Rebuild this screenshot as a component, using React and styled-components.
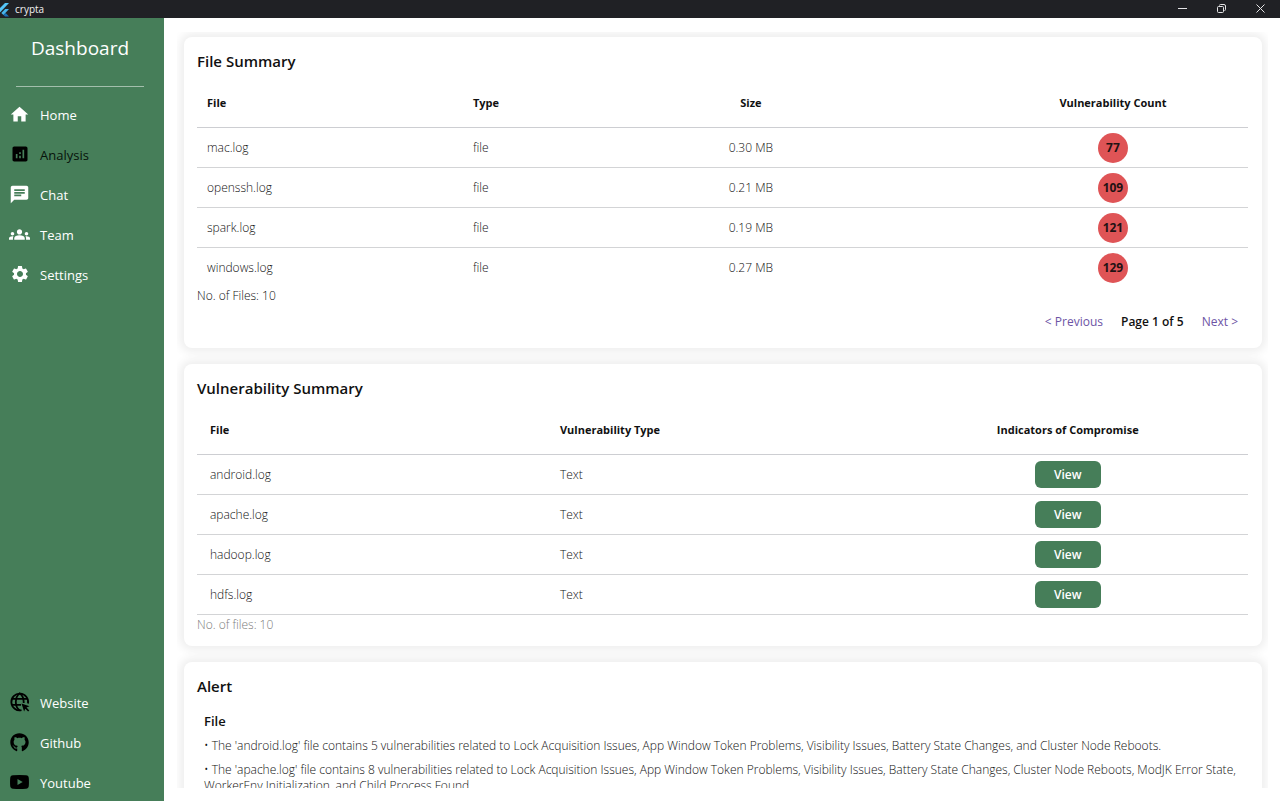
import React from "react";
import styled, { createGlobalStyle } from "styled-components";
import { MdHome, MdAnalytics, MdChat, MdGroups, MdSettings } from "react-icons/md";
import { FaGithub } from "react-icons/fa";

const GREEN = "#467e59";

const GlobalStyle = createGlobalStyle`
  * { box-sizing: border-box; }
  body {
    margin: 0;
    background: #fff;
    color: #111;
    font-family: "Open Sans", "Noto Sans", sans-serif;
    font-size: 12px;
    line-height: 16px;
  }
  button { font: inherit; cursor: pointer; }
`;

const Window = styled.div`
  height: 100vh;
  display: flex;
  flex-direction: column;
`;

const TitleBar = styled.header`
  flex: none;
  height: 18px;
  display: flex;
  align-items: center;
  justify-content: space-between;
  background: #202125;
  color: #f2f2f2;
  font-size: 10px;
`;

const AppName = styled.div`
  display: flex;
  align-items: center;
  gap: 5px;
`;

const WindowControls = styled.div`
  display: flex;
`;

const WindowButton = styled.button`
  width: 39px;
  height: 18px;
  padding: 0 0 2px;
  border: 0;
  background: none;
  color: #e4e4e6;
  display: grid;
  place-items: center;
`;

const Body = styled.div`
  flex: 1;
  min-height: 0;
  display: flex;
`;

const Sidebar = styled.aside`
  flex: none;
  width: 164px;
  background: ${GREEN};
  color: #fff;
  display: flex;
  flex-direction: column;
`;

const Brand = styled.h1`
  margin: 0 20px 0 16px;
  padding: 16px 0 24px;
  border-bottom: 1px solid #a3bfac;
  font-size: 19px;
  font-weight: 400;
  line-height: 28px;
  text-align: center;
`;

const NavList = styled.nav`
  display: flex;
  flex-direction: column;
  gap: 4px;
  padding-top: 10px;

  & + & {
    margin-top: auto;
  }
`;

const NavLink = styled.a`
  height: 36px;
  display: flex;
  align-items: center;
  gap: 10px;
  padding-left: 9px;
  color: ${(p) => (p.$active ? "#07130b" : "#fff")};
  font-size: 13px;
  font-weight: 500;
  text-decoration: none;
`;

const NavIcon = styled.span`
  width: 21px;
  height: 23px;
  padding-bottom: 2px;
  display: grid;
  place-items: center;
  color: ${(p) => (p.$dark ? "#000" : "#fff")};
`;

const Content = styled.main`
  flex: 1;
  min-width: 0;
  margin: 14px 12px 13px 13px;
  padding: 5px 6px 16px 7px;
  display: flex;
  flex-direction: column;
  gap: 16px;
  overflow: hidden;
`;

const Card = styled.section`
  flex: none;
  padding: 14px 14px 8px 13px;
  border-radius: 8px;
  background: #fff;
  box-shadow: 0 0 10px 4px rgba(0, 0, 0, 0.07);
`;

const CardTitle = styled.h2`
  margin: 0 0 8px;
  font-size: 15px;
  font-weight: 650;
  line-height: 20px;
`;

const Table = styled.table`
  width: 100%;
  table-layout: fixed;
  border-collapse: separate;
  border-spacing: 0;
`;

const Column = styled.col`
  width: ${(p) => p.$width};
`;

const HeadCell = styled.th`
  height: 49px;
  padding: 0 ${(p) => p.$inset};
  border-bottom: 1px solid #cdced2;
  font-size: 11px;
  font-weight: 700;
  text-align: ${(p) => (p.$center ? "center" : "left")};
`;

const Cell = styled.td`
  height: 40px;
  padding: 0 ${(p) => p.$inset};
  border-bottom: 1px solid ${(p) => (p.$last ? "transparent" : "#d3d4d6")};
  font-weight: 320;
  text-align: ${(p) => (p.$center ? "center" : "left")};
`;

const CountBadge = styled.span`
  display: inline-grid;
  place-items: center;
  width: 30px;
  height: 30px;
  border-radius: 50%;
  background: #df5456;
  color: #1e1213;
  font-size: 12px;
  font-weight: 700;
  vertical-align: middle;
`;

const ViewButton = styled.button`
  width: 66px;
  height: 27px;
  padding: 0;
  border: 0;
  border-radius: 6px;
  background: ${GREEN};
  color: #fff;
  font-size: 12px;
  font-weight: 600;
  vertical-align: middle;
`;

const FileCount = styled.p`
  margin: 0;
  padding: ${(p) => (p.$muted ? "2px 0 5px" : "0")};
  color: ${(p) => (p.$muted ? "#7c7c7c" : "#111")};
  font-weight: 320;
`;

const Pager = styled.div`
  height: 36px;
  padding-right: 10px;
  display: flex;
  align-items: center;
  justify-content: flex-end;
  gap: 18px;
  font-weight: 600;
`;

const PagerButton = styled.button`
  padding: 0;
  border: 0;
  background: none;
  color: #6d54a5;
  font-size: 12px;
  font-weight: 400;
`;

const AlertBody = styled.div`
  padding: 0 7px;
`;

const AlertHeading = styled.h3`
  margin: 0 0 8px;
  font-size: 13px;
  font-weight: 650;
  line-height: 18px;
  padding-top: 8px;
`;

const AlertText = styled.p`
  margin: 0 0 8px;
  font-weight: 320;
`;

function FlutterLogo() {
  return (
    <svg width="10" height="15" viewBox="0 0 10 15" aria-hidden="true">
      <path d="M9 1H5L-2 8l2.200 2.200z" fill="#54c5f8" />
      <path d="M9 7H5.200L1.300 10.900l2.200 2.200z" fill="#48b5ec" />
      <path d="M3.500 13.100l1.500 1.400h4L5.700 10.900z" fill="#1a6fb8" />
    </svg>
  );
}

function WebsiteIcon() {
  return (
    <svg width="20" height="20" viewBox="0 0 20 20" fill="none" stroke="currentColor" strokeWidth="1.800" aria-hidden="true">
      <path d="M11.500 18.200A8.400 8.400 0 1 1 18 11.500" />
      <path d="M9.700 18.500C7 16.500 5.800 13.500 5.800 10s1.200-6.500 3.900-8.600c2.800 2.100 4 5.100 4 8.600v1" />
      <path d="M2 6.800h15.500M2 12.800h9" />
      <path d="M11.500 11.500l8 2.800-3 1.300 2.800 2.800-1.200 1.200-2.800-2.800-1.200 2.800z" fill="currentColor" stroke="none" />
    </svg>
  );
}

function YoutubeIcon() {
  return (
    <svg width="19" height="14" viewBox="0 0 19 14" aria-hidden="true">
      <path
        fillRule="evenodd"
        fill="currentColor"
        d="M3 .3Q9.500-.3 16 .3q2.700.2 2.800 2.900.3 3.800 0 7.600-.1 2.700-2.800 2.900-6.500.6-13 0Q.3 13.500.200 10.800q-.3-3.800 0-7.600Q.3.500 3 .300zM7.500 4v6l5.200-3z"
      />
    </svg>
  );
}

const mainLinks = [
  { label: "Home", icon: <MdHome size={21} /> },
  { label: "Analysis", icon: <MdAnalytics size={20} />, active: true },
  { label: "Chat", icon: <MdChat size={21} /> },
  { label: "Team", icon: <MdGroups size={21} /> },
  { label: "Settings", icon: <MdSettings size={20} /> },
];

const externalLinks = [
  { label: "Website", icon: <WebsiteIcon /> },
  { label: "Github", icon: <FaGithub size={19} /> },
  { label: "Youtube", icon: <YoutubeIcon /> },
];

const files = [
  { name: "mac.log", type: "file", size: "0.30 MB", count: 77 },
  { name: "openssh.log", type: "file", size: "0.21 MB", count: 109 },
  { name: "spark.log", type: "file", size: "0.19 MB", count: 121 },
  { name: "windows.log", type: "file", size: "0.27 MB", count: 129 },
];

const vulnerableFiles = ["android.log", "apache.log", "hadoop.log", "hdfs.log"];

const alerts = [
  "The 'android.log' file contains 5 vulnerabilities related to Lock Acquisition Issues, App Window Token Problems, Visibility Issues, Battery State Changes, and Cluster Node Reboots.",
  "The 'apache.log' file contains 8 vulnerabilities related to Lock Acquisition Issues, App Window Token Problems, Visibility Issues, Battery State Changes, Cluster Node Reboots, ModJK Error State, WorkerEnv Initialization, and Child Process Found.",
];

function FileSummary() {
  return (
    <Card>
      <CardTitle>File Summary</CardTitle>
      <Table>
        <colgroup>
          <Column $width="25.3%" />
          <Column $width="5.8%" />
          <Column $width="43.2%" />
          <Column $width="25.7%" />
        </colgroup>
        <thead>
          <tr>
            <HeadCell $inset="10px">File</HeadCell>
            <HeadCell $inset="10px">Type</HeadCell>
            <HeadCell $inset="10px" $center>Size</HeadCell>
            <HeadCell $inset="10px" $center>Vulnerability Count</HeadCell>
          </tr>
        </thead>
        <tbody>
          {files.map((file, i) => {
            const last = i === files.length - 1;
            return (
              <tr key={file.name}>
                <Cell $inset="10px" $last={last}>{file.name}</Cell>
                <Cell $inset="10px" $last={last}>{file.type}</Cell>
                <Cell $inset="10px" $last={last} $center>{file.size}</Cell>
                <Cell $inset="10px" $last={last} $center>
                  <CountBadge>{file.count}</CountBadge>
                </Cell>
              </tr>
            );
          })}
        </tbody>
      </Table>
      <FileCount>No. of Files: 10</FileCount>
      <Pager>
        <PagerButton type="button">&lt; Previous</PagerButton>
        <span>Page 1 of 5</span>
        <PagerButton type="button">Next &gt;</PagerButton>
      </Pager>
    </Card>
  );
}

function VulnerabilitySummary() {
  return (
    <Card>
      <CardTitle>Vulnerability Summary</CardTitle>
      <Table>
        <colgroup>
          <Column $width="33.3%" />
          <Column $width="32.4%" />
          <Column $width="34.3%" />
        </colgroup>
        <thead>
          <tr>
            <HeadCell $inset="13px">File</HeadCell>
            <HeadCell $inset="13px">Vulnerability Type</HeadCell>
            <HeadCell $inset="13px" $center>Indicators of Compromise</HeadCell>
          </tr>
        </thead>
        <tbody>
          {vulnerableFiles.map((name) => (
            <tr key={name}>
              <Cell $inset="13px">{name}</Cell>
              <Cell $inset="13px">Text</Cell>
              <Cell $inset="13px" $center>
                <ViewButton type="button">View</ViewButton>
              </Cell>
            </tr>
          ))}
        </tbody>
      </Table>
      <FileCount $muted>No. of files: 10</FileCount>
    </Card>
  );
}

function NavItems({ links, dark }) {
  return (
    <NavList>
      {links.map(({ label, icon, active }) => (
        <NavLink key={label} href="#" $active={active}>
          <NavIcon $dark={dark || active}>{icon}</NavIcon>
          {label}
        </NavLink>
      ))}
    </NavList>
  );
}

export default function App() {
  return (
    <Window>
      <GlobalStyle />
      <TitleBar>
        <AppName>
          <FlutterLogo />
          crypta
        </AppName>
        <WindowControls>
          <WindowButton type="button" aria-label="Minimize">
            <svg width="9" height="9" stroke="currentColor"><path d="M0 4.500h9" /></svg>
          </WindowButton>
          <WindowButton type="button" aria-label="Restore">
            <svg width="9" height="9" fill="none" stroke="currentColor">
              <rect x=".5" y="2.500" width="6" height="6" rx="1" />
              <path d="M2.500 1.500Q2.500.5 3.500.5h3.500q1.500 0 1.500 1.500v3.500q0 1-1 1" />
            </svg>
          </WindowButton>
          <WindowButton type="button" aria-label="Close">
            <svg width="9" height="9" stroke="currentColor"><path d="M.5.5l8 8M8.500.5l-8 8" /></svg>
          </WindowButton>
        </WindowControls>
      </TitleBar>
      <Body>
        <Sidebar>
          <Brand>Dashboard</Brand>
          <NavItems links={mainLinks} />
          <NavItems links={externalLinks} dark />
        </Sidebar>
        <Content>
          <FileSummary />
          <VulnerabilitySummary />
          <Card>
            <CardTitle>Alert</CardTitle>
            <AlertBody>
              <AlertHeading>File</AlertHeading>
              {alerts.map((text) => (
                <AlertText key={text}>• {text}</AlertText>
              ))}
            </AlertBody>
          </Card>
        </Content>
      </Body>
    </Window>
  );
}
